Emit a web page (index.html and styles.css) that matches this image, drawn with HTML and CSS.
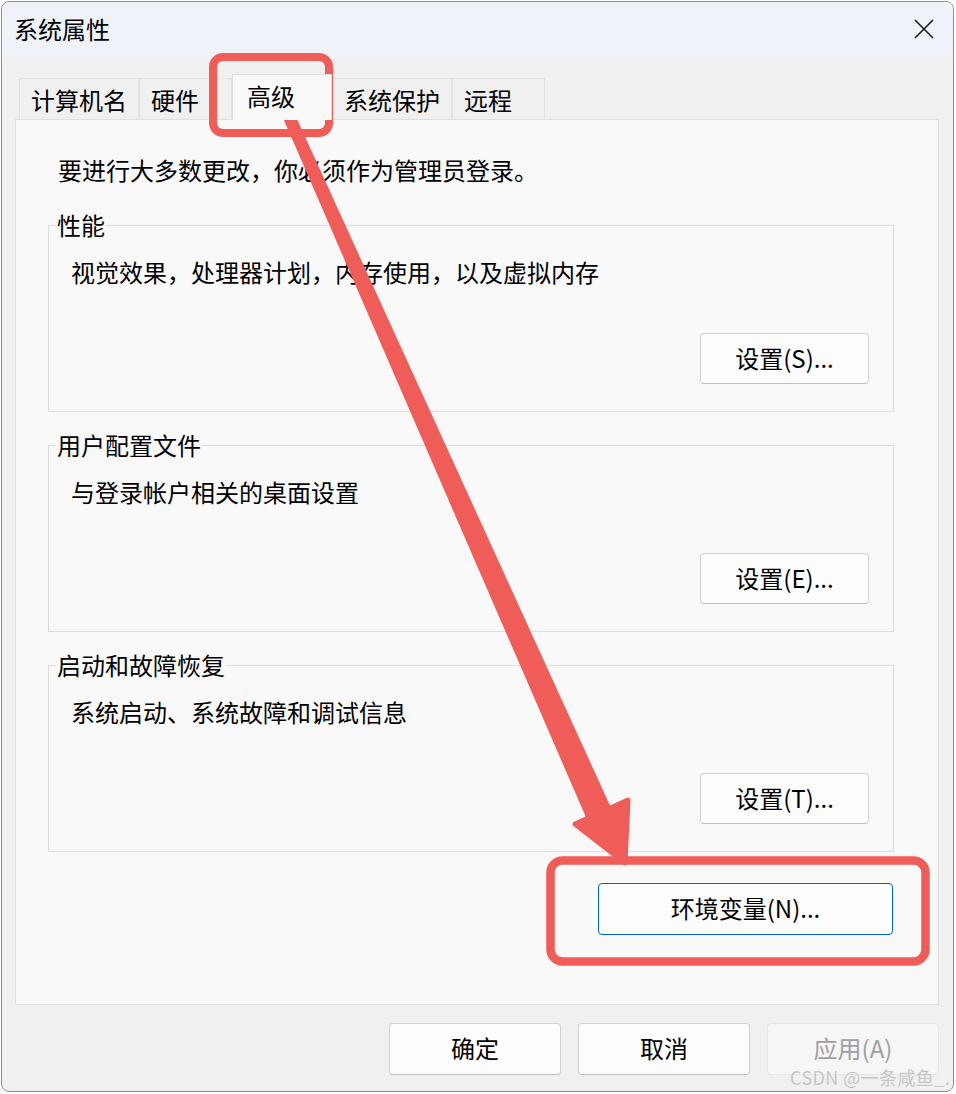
FILE: index.html
```html
<!DOCTYPE html>
<html lang="zh-CN">
<head>
<meta charset="utf-8">
<title>系统属性</title>
<link rel="stylesheet" href="styles.css">
</head>
<body>
<div class="window">
  <div class="titlebar">
    <span class="title">系统属性</span>
    <svg class="close" width="20" height="20" viewBox="0 0 20 20"><path d="M1 1 L19 19 M19 1 L1 19" stroke="#1b1b1b" stroke-width="1.6" fill="none"/></svg>
  </div>
  <div class="tabs">
    <div class="tab">计算机名</div>
    <div class="tab">硬件</div>
    <div class="tab selected">高级</div>
    <div class="tab">系统保护</div>
    <div class="tab">远程</div>
  </div>
  <div class="panel">
    <p class="intro">要进行大多数更改，你必须作为管理员登录。</p>
    <fieldset class="group first">
      <legend>性能</legend>
      <p class="desc">视觉效果，处理器计划，内存使用，以及虚拟内存</p>
      <div class="btnrow"><button class="btn">设置(S)...</button></div>
    </fieldset>
    <fieldset class="group">
      <legend>用户配置文件</legend>
      <p class="desc">与登录帐户相关的桌面设置</p>
      <div class="btnrow"><button class="btn">设置(E)...</button></div>
    </fieldset>
    <fieldset class="group">
      <legend>启动和故障恢复</legend>
      <p class="desc">系统启动、系统故障和调试信息</p>
      <div class="btnrow"><button class="btn">设置(T)...</button></div>
    </fieldset>
    <div class="envrow"><button class="btn env">环境变量(N)...</button></div>
  </div>
  <div class="footer">
    <button class="btn foot">确定</button>
    <button class="btn foot">取消</button>
    <button class="btn foot disabled">应用(A)</button>
  </div>
</div>
<svg class="annot" width="956" height="1094" viewBox="0 0 956 1094">
  <rect x="213" y="57" width="116" height="76" rx="10" ry="10" fill="none" stroke="#f05c58" stroke-width="8"/>
  <rect x="550.5" y="860.5" width="375" height="101" rx="12" ry="12" fill="none" stroke="#f05c58" stroke-width="8.5"/>
  <polygon points="279.8,110.4 290.8,105.6 612,810 588,822" fill="#f05c58"/>
  <circle cx="285.3" cy="108" r="5.8" fill="#f05c58"/>
  <polygon points="575,824 628,800 625,863" fill="#f05c58" stroke="#f05c58" stroke-width="5" stroke-linejoin="round"/>
</svg>
<div class="watermark">CSDN @一条咸鱼_.</div>
</body>
</html>
```
FILE: styles.css
```css
html, body {
  margin: 0;
  padding: 0;
  background: #ffffff;
  width: 956px;
  height: 1094px;
  overflow: hidden;
  position: relative;
  font-family: "Noto Sans CJK SC", "Noto Sans", sans-serif;
  color: #000;
}

.window {
  margin: 1px 0 0 1px;
  width: 953px;
  height: 1091px;
  box-sizing: border-box;
  border: 1px solid #8f8f8f;
  border-radius: 8px;
  background: #f0f0f0;
  overflow: hidden;
  display: flex;
  flex-direction: column;
}

.titlebar {
  height: 55px;
  flex: none;
  background: #eff3f9;
  display: flex;
  align-items: center;
  justify-content: space-between;
  padding: 0 19px 0 12px;
}

.title {
  font-size: 24px;
  line-height: 30px;
  margin-top: -2px;
}

.close {
  display: block;
  margin-top: -2px;
}

.tabs {
  display: flex;
  align-items: flex-end;
  margin-top: 17px;
  padding-left: 17px;
  height: 45px;
  flex: none;
}

.tab {
  height: 41px;
  box-sizing: border-box;
  min-width: 93px;
  padding: 2px 11px 0 11px;
  border: 1px solid #e2e2e2;
  border-bottom: none;
  background: #f0f0f0;
  font-size: 24px;
  line-height: 38px;
  overflow: hidden;
  white-space: nowrap;
}

.tab.selected {
  height: 46px;
  min-width: 100px;
  padding-left: 14px;
  background: #f9f9f9;
  margin-bottom: -1px;
  position: relative;
  z-index: 1;
  border-color: #dedede;
}

.panel {
  margin-left: 13px;
  width: 924px;
  height: 886px;
  flex: none;
  box-sizing: border-box;
  border: 1px solid #dedede;
  background: #f9f9f9;
  padding: 0 44px 0 32px;
}

.intro {
  margin: 34px 0 0 10px;
  font-size: 24px;
  line-height: 32px;
}

.group {
  margin: 19px 0 0 0;
  padding: 0 24px 27px 0;
  border: 1px solid #dcdcdc;
  min-width: 0;
}

.group.first {
  margin-top: 25px;
}

.group legend {
  font-size: 24px;
  line-height: 28px;
  padding: 0 1px;
  margin-left: 7px;
}

.desc {
  margin: 17px 0 0 22px;
  font-size: 24px;
  line-height: 32px;
}

.btnrow {
  display: flex;
  justify-content: flex-end;
  margin-top: 45px;
}

.btn {
  font-family: "Noto Sans CJK SC", "Noto Sans", sans-serif;
  font-size: 24px;
  color: #000;
  background: #fdfdfd;
  border: 1px solid #d0d0d0;
  border-bottom-color: #bfbfbf;
  border-radius: 4px;
  box-sizing: border-box;
  display: flex;
  align-items: center;
  justify-content: center;
  padding: 0 0 2px 0;
  margin: 0;
  line-height: 30px;
}

.btnrow .btn {
  width: 169px;
  height: 51px;
}

.envrow {
  display: flex;
  justify-content: flex-end;
  margin-top: 31px;
  padding-right: 1px;
}

.btn.env {
  width: 295px;
  height: 52px;
  border: 1px solid #0067c0;
}

.footer {
  display: flex;
  justify-content: flex-end;
  gap: 17px;
  margin-top: 18px;
  padding-right: 14px;
}

.btn.foot {
  width: 172px;
  height: 52px;
}

.btn.disabled {
  color: #a0a0a0;
  background: #f6f6f6;
  border-color: #e6e6e6;
}

.annot {
  position: absolute;
  left: 0;
  top: 0;
  pointer-events: none;
}

.watermark {
  position: absolute;
  left: 790px;
  top: 1064px;
  font-size: 18px;
  line-height: 26px;
  color: #c4c4c4;
  text-shadow: 0 0 1px #ffffff;
  white-space: nowrap;
  letter-spacing: 0.4px;
}
```
